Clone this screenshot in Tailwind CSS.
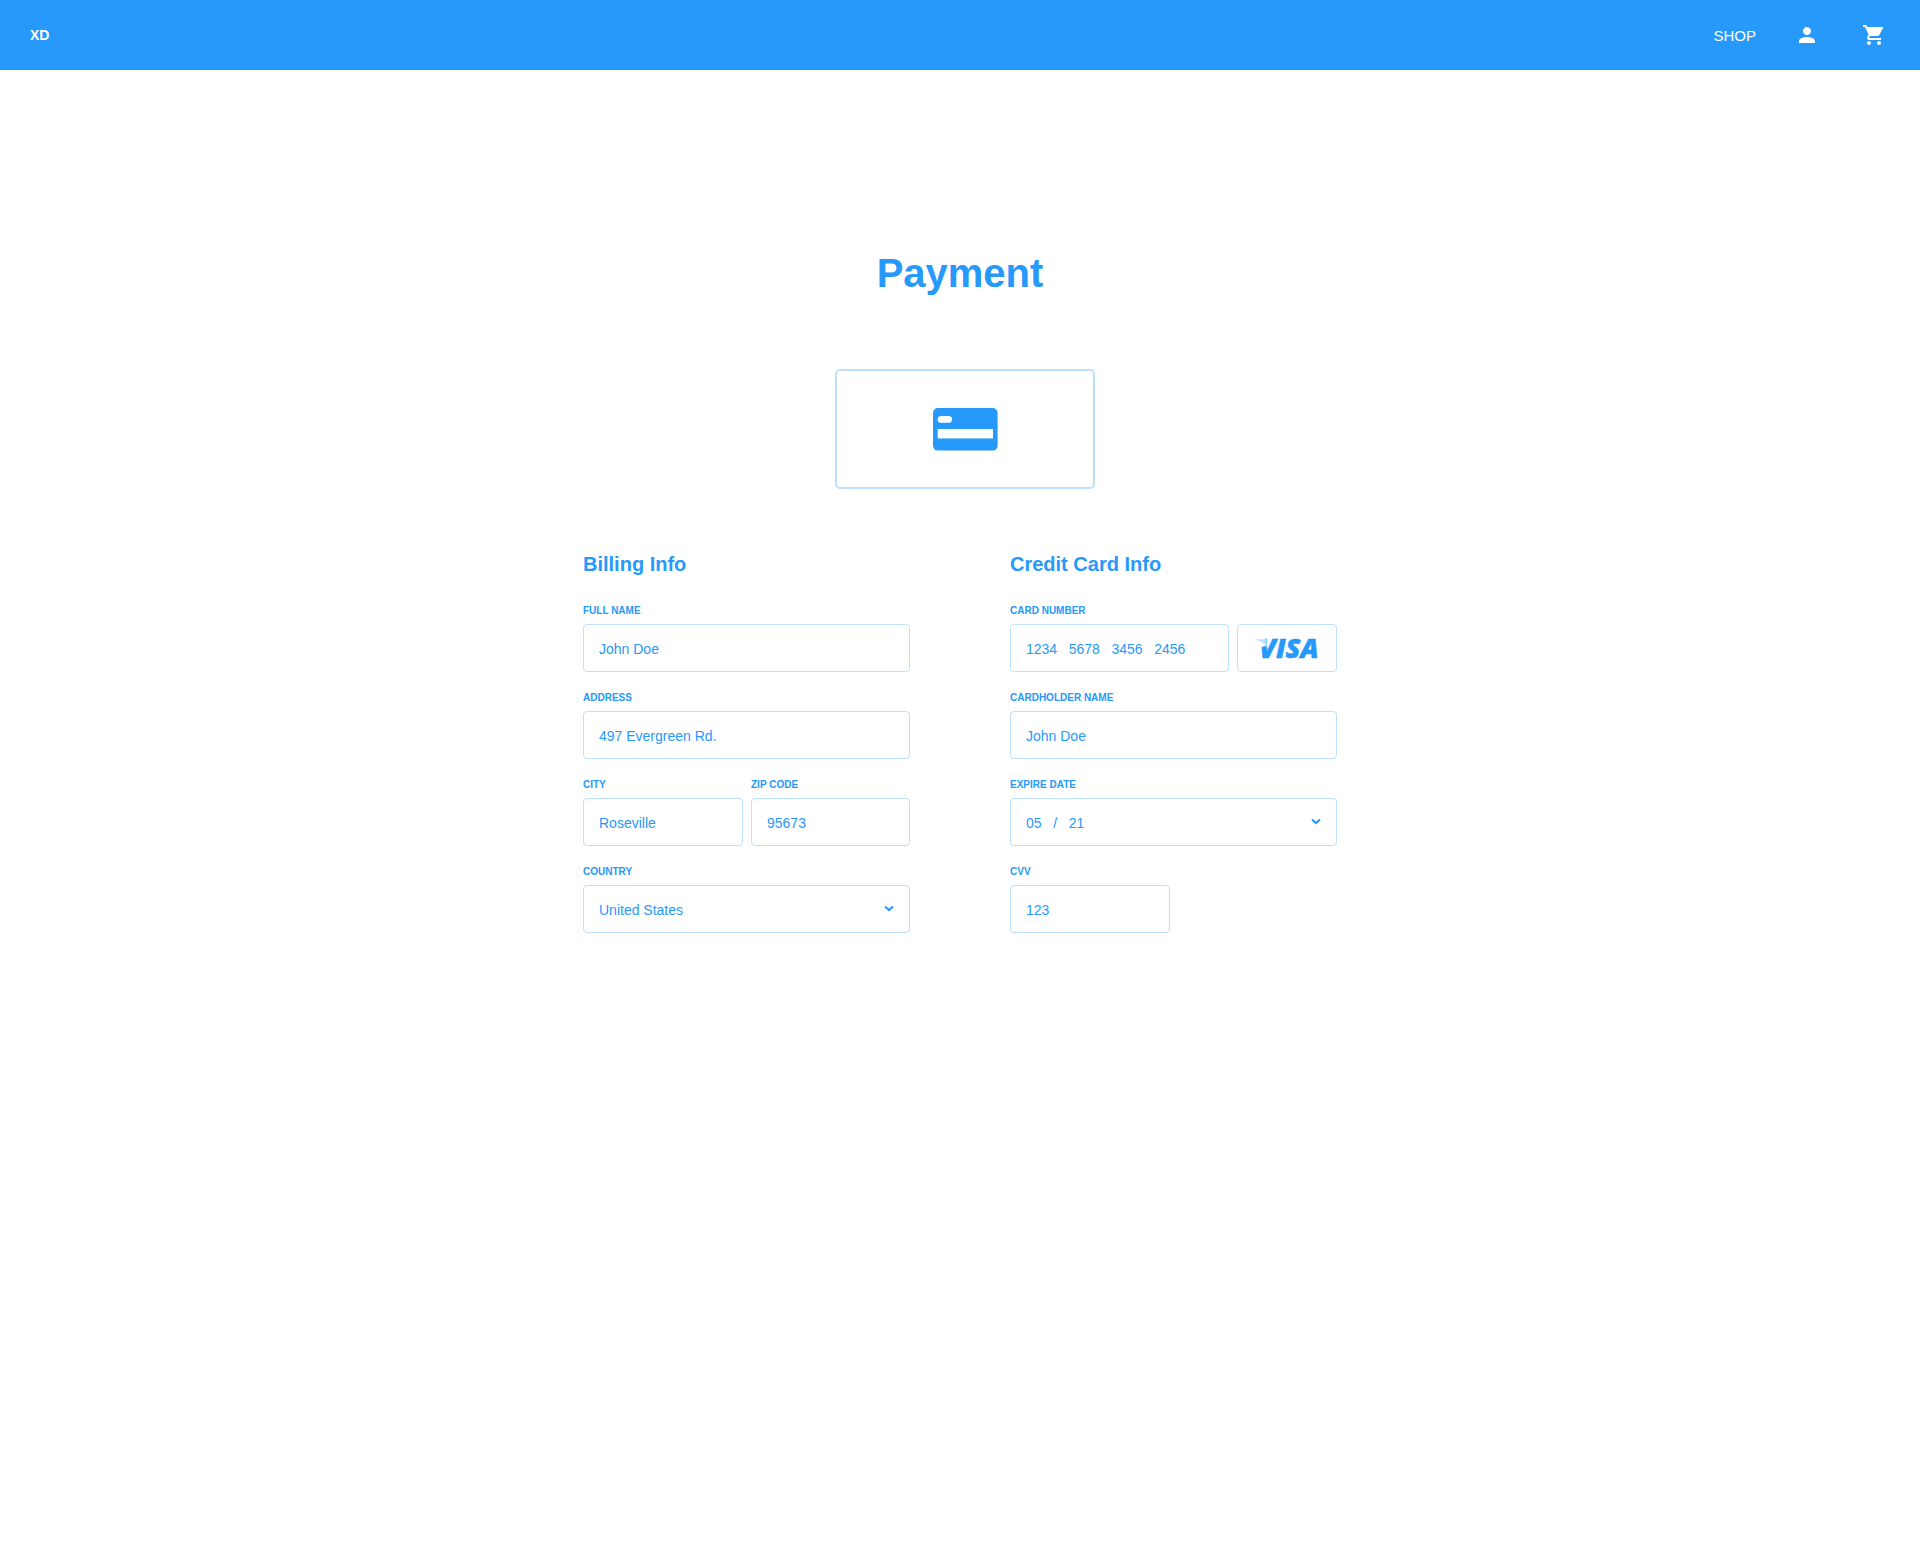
<!DOCTYPE html>
<html lang="en">
<head>
<meta charset="utf-8">
<title>Payment</title>
<script src="https://cdn.jsdelivr.net/npm/@tailwindcss/browser@4"></script>
</head>
<body class="min-h-screen bg-white font-['Liberation_Sans',Arial,sans-serif] text-sm text-[#2699fb]">
<header class="flex h-[70px] items-center justify-between bg-[#2699fb] pr-[34px] pl-[30px] text-white">
  <a class="font-bold">XD</a>
  <nav class="flex items-center">
    <a class="mr-[39px] pt-0.5 text-[15px]">SHOP</a>
    <svg class="mr-[43px] size-6" viewBox="0 0 24 24" fill="currentColor"><path d="M12 12c2.21 0 4-1.79 4-4s-1.79-4-4-4-4 1.79-4 4 1.79 4 4 4zm0 2c-2.67 0-8 1.34-8 4v2h16v-2c0-2.66-5.33-4-8-4z"/></svg>
    <svg class="size-6" viewBox="0 0 24 24" fill="currentColor"><path d="M7 18c-1.1 0-1.99.9-1.99 2S5.900 22 7 22s2-.9 2-2-.9-2-2-2zM1 2v2h2l3.600 7.590-1.350 2.450c-.16.28-.25.61-.25.96 0 1.100.9 2 2 2h12v-2H7.420c-.14 0-.25-.11-.25-.25l.03-.12.9-1.630h7.450c.75 0 1.410-.41 1.750-1.030l3.580-6.490c.08-.14.12-.31.12-.48 0-.55-.45-1-1-1H5.210l-.94-2H1zm16 16c-1.100 0-1.990.9-1.990 2s.89 2 1.990 2 2-.9 2-2-.9-2-2-2z"/></svg>
  </nav>
</header>
<main class="flex flex-col items-center pt-[178px]">
  <h1 class="text-[40px] leading-[50px] font-bold">Payment</h1>
  <div class="mt-[71px] ml-[10px] flex h-[120px] w-[260px] items-center justify-center rounded-[5px] border-2 border-[#bce0fd]">
    <svg class="h-[43px] w-[65px]" viewBox="0 0 65 43"><rect width="64.600" height="42.600" rx="5" fill="#2699fb"/><rect x="4.700" y="8" width="14.300" height="6.800" rx="3.400" fill="white"/><rect x="4.700" y="21" width="55.300" height="9.400" fill="white"/></svg>
  </div>
  <div class="mt-[63px] flex gap-[100px]">
    <section class="w-[327px]">
      <h2 class="text-xl leading-6 font-bold">Billing Info</h2>
      <div class="mt-[29px] flex flex-col gap-5">
        <div>
          <div class="h-[19px] text-[10px] leading-3 font-bold">FULL NAME</div>
          <div class="flex h-12 items-center rounded border border-[#bce0fd] px-[15px] pt-0.5">John Doe</div>
        </div>
        <div>
          <div class="h-[19px] text-[10px] leading-3 font-bold">ADDRESS</div>
          <div class="flex h-12 items-center rounded border border-[#bce0fd] px-[15px] pt-0.5">497 Evergreen Rd.</div>
        </div>
        <div class="flex gap-2">
          <div class="w-[160px]">
            <div class="h-[19px] text-[10px] leading-3 font-bold">CITY</div>
            <div class="flex h-12 items-center rounded border border-[#bce0fd] px-[15px] pt-0.5">Roseville</div>
          </div>
          <div class="w-[159px]">
            <div class="h-[19px] text-[10px] leading-3 font-bold">ZIP CODE</div>
            <div class="flex h-12 items-center rounded border border-[#bce0fd] px-[15px] pt-0.5">95673</div>
          </div>
        </div>
        <div>
          <div class="h-[19px] text-[10px] leading-3 font-bold">COUNTRY</div>
          <div class="flex h-12 items-center justify-between rounded border border-[#bce0fd] px-[15px] pt-0.5">United States
            <svg class="mb-1 h-[7px] w-[10px]" viewBox="0 0 10 7" fill="none" stroke="currentColor" stroke-width="2"><path d="M1 1.500l4 3.600 4-3.600"/></svg>
          </div>
        </div>
      </div>
    </section>
    <section class="w-[327px]">
      <h2 class="text-xl leading-6 font-bold">Credit Card Info</h2>
      <div class="mt-[29px] flex flex-col gap-5">
        <div>
          <div class="h-[19px] text-[10px] leading-3 font-bold">CARD NUMBER</div>
          <div class="flex gap-2">
            <div class="flex h-12 w-[219px] items-center gap-[11.6px] rounded border border-[#bce0fd] px-[15px] pt-0.5"><span>1234</span><span>5678</span><span>3456</span><span>2456</span></div>
            <div class="flex h-12 w-[100px] items-center justify-center rounded border border-[#bce0fd]">
              <svg class="h-[22px] w-[64px] overflow-visible" viewBox="0 0 64 22" role="img" aria-label="Visa"><text x="4.200" y="21.200" font-family="Open Sans" font-size="26" font-weight="800" font-style="italic" textLength="59.500" lengthAdjust="spacingAndGlyphs" fill="#2699fb" stroke="#2699fb" stroke-width=".5">VISA</text><path d="M0 0h9.500v2.400H11l.6 6L7 10 0 6z" fill="white"/><path d="M.8 2.200h7.400c1.500 0 2.400.7 2.700 2l1.300 6.400C9.900 7 6 3.800.8 2.800z" fill="#bce0fd"/></svg>
            </div>
          </div>
        </div>
        <div>
          <div class="h-[19px] text-[10px] leading-3 font-bold">CARDHOLDER NAME</div>
          <div class="flex h-12 items-center rounded border border-[#bce0fd] px-[15px] pt-0.5">John Doe</div>
        </div>
        <div>
          <div class="h-[19px] text-[10px] leading-3 font-bold">EXPIRE DATE</div>
          <div class="flex h-12 items-center rounded border border-[#bce0fd] px-[15px] pt-0.5"><span class="mr-[11.6px]">05</span><span class="mr-[11.6px]">/</span><span>21</span>
            <svg class="mb-1 ml-auto h-[7px] w-[10px]" viewBox="0 0 10 7" fill="none" stroke="currentColor" stroke-width="2"><path d="M1 1.500l4 3.600 4-3.600"/></svg>
          </div>
        </div>
        <div>
          <div class="h-[19px] text-[10px] leading-3 font-bold">CVV</div>
          <div class="flex h-12 w-[160px] items-center rounded border border-[#bce0fd] px-[15px] pt-0.5">123</div>
        </div>
      </div>
    </section>
  </div>
</main>
</body>
</html>
